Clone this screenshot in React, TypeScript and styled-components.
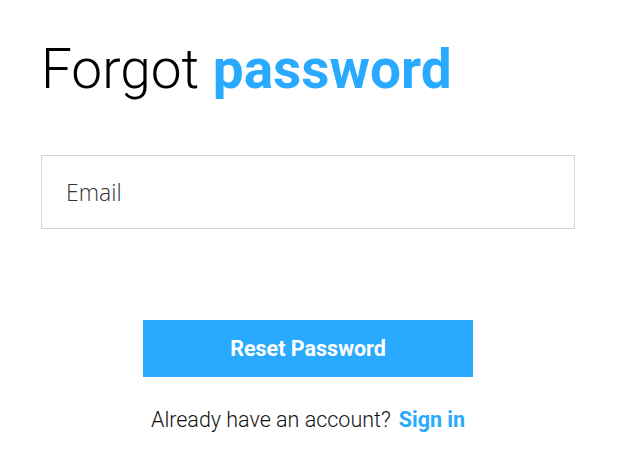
import styled, { createGlobalStyle } from 'styled-components';

const GlobalStyle = createGlobalStyle`
    body {
        margin: 0;
        background: #ffffff;
        font-family: Roboto, "Liberation Sans", sans-serif;
    }
`;

const Page = styled.div`
    width: 534px;
    padding: 37px 0 0 41px;
    display: flex;
    flex-direction: column;
`;

const Title = styled.h1`
    margin: 0;
    font-family: Roboto, sans-serif;
    font-weight: 300;
    font-size: 55px;
    line-height: 64px;
    color: #000;

    span {
        font-weight: 700;
        color: #29aaff;
    }
`;

const EmailInput = styled.input`
    margin-top: 54px;
    box-sizing: border-box;
    width: 534px;
    height: 74px;
    border: 1px solid #d6d6d6;
    padding: 0 24px;
    font-family: "Open Sans", sans-serif;
    font-weight: 300;
    font-size: 23px;
    outline: none;

    &::placeholder {
        color: #333;
    }
`;

const ResetButton = styled.button`
    align-self: center;
    margin-top: 91px;
    width: 330px;
    height: 57px;
    border: none;
    background: #29aaff;
    color: #fff;
    font-family: Roboto, sans-serif;
    font-weight: 700;
    font-size: 21.5px;
    cursor: pointer;
`;

const Footer = styled.p`
    margin: 31px 0 0;
    text-align: center;
    font-family: Roboto, sans-serif;
    font-weight: 300;
    font-size: 21.5px;
    line-height: 24px;
    color: #111;

    a {
        margin-left: 8px;
        font-weight: 700;
        color: #29aaff;
        text-decoration: none;
    }
`;

const App = () => {
    return (
        <>
            <GlobalStyle />
            <Page>
                <Title>Forgot <span>password</span></Title>
                <EmailInput type='email' placeholder='Email' />
                <ResetButton>Reset Password</ResetButton>
                <Footer>
                    Already have an account?<a href='#'>Sign in</a>
                </Footer>
            </Page>
        </>
    )
}

export default App
